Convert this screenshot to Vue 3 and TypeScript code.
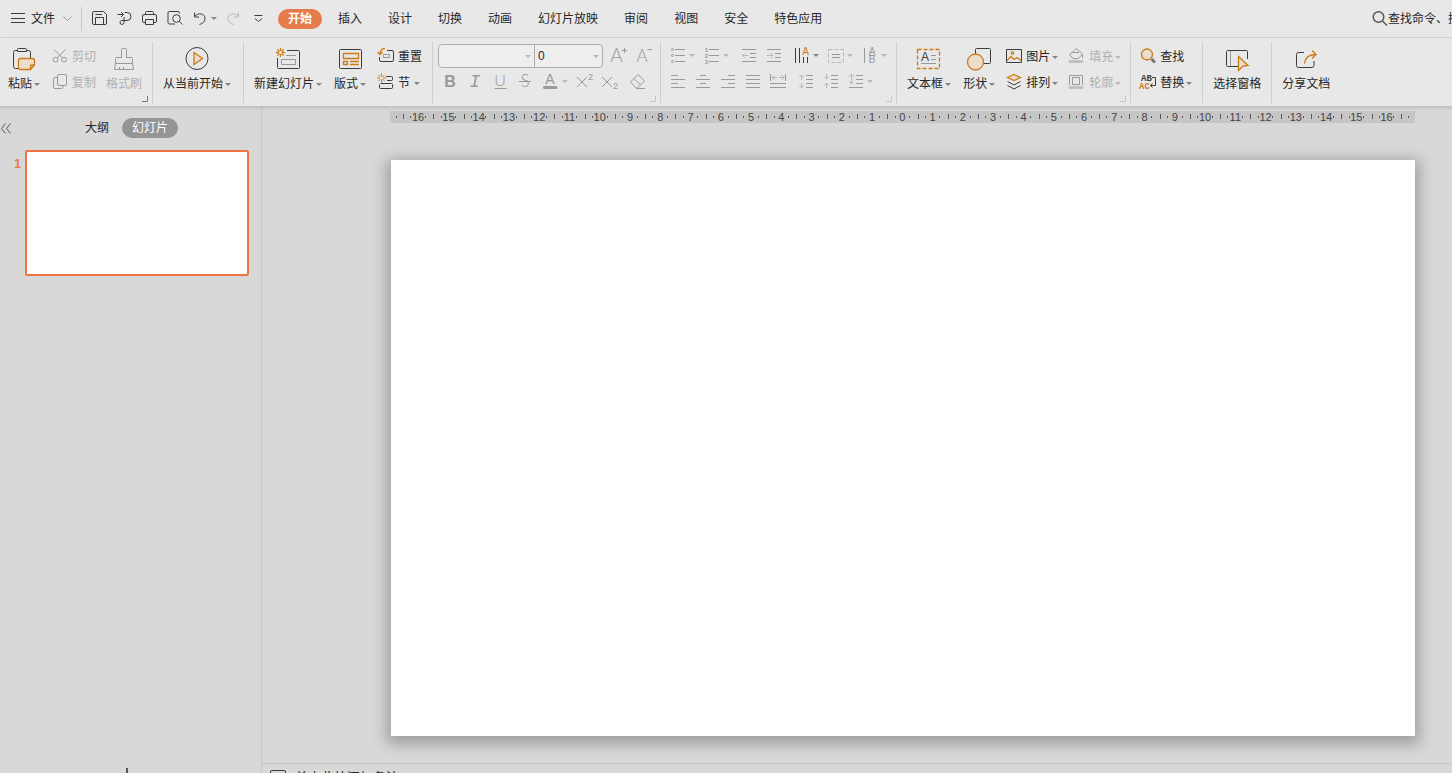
<script setup lang="ts">
import { h, ref } from 'vue'

type Part = { c: string; d?: string; t?: string; x?: number; y?: number; s?: number }

const p = (c: string, d: string): Part => ({ c, d })
const t = (c: string, text: string, x: number, y: number, s: number): Part => ({ c, t: text, x, y, s })
const circle = (x: number, y: number, r: number) =>
  `M${x - r} ${y}a${r} ${r} 0 1 0 ${2 * r} 0a${r} ${r} 0 1 0 ${-2 * r} 0Z`
const star = (x: number, y: number) =>
  [[0, 1], [1, 0], [0.7, 0.7], [0.7, -0.7]]
    .map(([a, b]) => `M${x - a * 4.5} ${y - b * 4.5}L${x - a * 1.5} ${y - b * 1.5}M${x + a * 1.5} ${y + b * 1.5}L${x + a * 4.5} ${y + b * 4.5}`)
    .join('')

const icons: Record<string, { size: [number, number]; parts: Part[] }> = {
  menu: { size: [14, 17], parts: [p('k', 'M0 3.5H14M0 8.5H14M0 12.5H14')] },
  chevron: { size: [9, 17], parts: [p('g', 'M0.5 6.5L4.5 10.5L8.5 6.5')] },
  caret: { size: [6, 17], parts: [p('fill', 'M0 7H6L3 10Z')] },
  save: { size: [17, 17], parts: [p('k', 'M3 1.5H12.5L15.5 4.5V13a1.5 1.5 0 0 1-1.5 1.5H3A1.5 1.5 0 0 1 1.5 13V3A1.5 1.5 0 0 1 3 1.5ZM4.5 14.5V7.5H12.5V14.5M4.5 4.5H11')] },
  output: { size: [17, 17], parts: [p('k', 'M1.5 4.5H7.5M5 2L7.5 4.5L5 7M8.5 2.5H11a4 4 0 0 1 0 8H5.5a2 2 0 1 0 2.5 2V7')] },
  print: { size: [17, 17], parts: [p('k', 'M4.5 4.5V2.5a1 1 0 0 1 1-1H11.5a1 1 0 0 1 1 1V4.5M4.5 12.5H3a1.5 1.5 0 0 1-1.5-1.5V6A1.5 1.5 0 0 1 3 4.5H14A1.5 1.5 0 0 1 15.5 6V11a1.5 1.5 0 0 1-1.5 1.5H12.5M4.5 9.5H12.5V14.5H4.5Z')] },
  preview: { size: [17, 17], parts: [p('k', 'M13.5 3.5V3A1.5 1.5 0 0 0 12 1.5H3.5A1.5 1.5 0 0 0 2 3V12.5A1.5 1.5 0 0 0 3.5 14H9'), p('k', circle(10.5, 8.5, 3.8)), p('k', 'M13.3 11.3L16.5 14.5')] },
  undo: { size: [17, 17], parts: [p('k', 'M3.5 2.5V7H8M3.5 6.5C6.5 2.5 14 3 14 8.5C14 12 11.5 13.5 8.5 14.5')] },
  redo: { size: [17, 17], parts: [p('l', 'M13.5 2.5V7H9M13.5 6.5C10.5 2.5 3 3 3 8.5C3 12 5.5 13.5 8.5 14.5')] },
  more: { size: [17, 17], parts: [p('k', 'M4.5 5.5H12.5M5 8.5L8.5 11.5L12 8.5')] },
  search: { size: [16, 17], parts: [p('m', circle(6.5, 7, 5.3)), p('m', 'M10.5 11L15 15.5')] },
  collapse: { size: [12, 11], parts: [p('m thinline', 'M5.5 0.5L1.5 5.5L5.5 10.5M10.5 0.5L6.5 5.5L10.5 10.5')] },
  add: { size: [16, 16], parts: [p('m thick', 'M8 0V16M0 8H16')] },
  notes: { size: [16, 14], parts: [p('k', 'M2 0.5H14A1.5 1.5 0 0 1 15.5 2V12A1.5 1.5 0 0 1 14 13.5H2A1.5 1.5 0 0 1 0.5 12V2A1.5 1.5 0 0 1 2 0.5ZM4 5.5H12M4 8.5H12')] },
  launcher: { size: [6, 6], parts: [p('', 'M5.5 0V5.5H0')] },

  paste: { size: [26, 26], parts: [p('k', 'M7 4.5H4.5a2 2 0 0 0-2 2V20.5a2 2 0 0 0 2 2H7M15 4.5H17.5a2 2 0 0 1 2 2V12M7.5 2.5H14.5a1 1 0 0 1 1 1V5.5H6.5V3.5a1 1 0 0 1 1-1Z'), p('o tint', 'M9.5 12.5H21.5a2 2 0 0 1 2 2V19L19.5 23.5H9.5a2 2 0 0 1-2-2V14.5a2 2 0 0 1 2-2Z'), p('o', 'M23.5 19H20.5a1 1 0 0 0-1 1V23')] },
  cut: { size: [18, 18], parts: [p('g', circle(5.5, 12.7, 2.4)), p('g', circle(14, 12.7, 2.4)), p('g', 'M4 2.5L12.5 11M15.5 2.5L7 11')] },
  copy: { size: [18, 18], parts: [p('g', 'M9 1.5H15a1.5 1.5 0 0 1 1.5 1.5V11a1.5 1.5 0 0 1-1.5 1.5H9A1.5 1.5 0 0 1 7.5 11V3A1.5 1.5 0 0 1 9 1.5ZM7.5 4.5H5A1.5 1.5 0 0 0 3.5 6V14A1.5 1.5 0 0 0 5 15.5H11.5A1.5 1.5 0 0 0 13 14V12.5')] },
  painter: { size: [26, 26], parts: [p('g', 'M10.5 11.5V3.5a1 1 0 0 1 1-1H14.5a1 1 0 0 1 1 1V11.5H20.5a1 1 0 0 1 1 1V17.5H4.5V12.5a1 1 0 0 1 1-1ZM4.5 17.5L3.5 23.5H22.5L21.5 17.5M8.5 23.5V21M12.5 23.5V21')] },
  play: { size: [26, 26], parts: [p('k', circle(13, 12.5, 11)), p('o tint', 'M10 6.5L18.5 12.5L10 18.5Z')] },
  newSlide: { size: [26, 26], parts: [p('k', 'M12 4.5H23.5a1 1 0 0 1 1 1V21.5a1 1 0 0 1-1 1H3.5a1 1 0 0 1-1-1V12'), p('g', 'M6.5 13.5H20.5V18.5H6.5ZM11 9.5H21'), p('o', star(5.5, 6.5))] },
  layout: { size: [26, 26], parts: [p('k', 'M3.5 3.5H23.5a1 1 0 0 1 1 1V21.5a1 1 0 0 1-1 1H3.5a1 1 0 0 1-1-1V4.5a1 1 0 0 1 1-1Z'), p('o', 'M6.5 7.5H21.5V12.5H6.5ZM6.5 15.5H10.5V18.5H6.5ZM13 15.5H22M13 18.5H22')] },
  reset: { size: [18, 18], parts: [p('k', 'M11 3.5H16a1.5 1.5 0 0 1 1.5 1.5V13a1.5 1.5 0 0 1-1.5 1.5H5A1.5 1.5 0 0 1 3.5 13V10'), p('g', 'M7.5 7.5H13.5V10.5H7.5Z'), p('o', 'M9 1.5C5.5 1.5 4 3.5 4 7.5M1.5 5L4 7.5L6.5 5')] },
  section: { size: [18, 18], parts: [p('k', 'M10 3.5H15.5a1 1 0 0 1 1 1V6.5a1 1 0 0 1-1 1H11M4.5 10.5H15.5a1 1 0 0 1 1 1V14.5a1 1 0 0 1-1 1H4.5a1 1 0 0 1-1-1V11.5'), p('o thinline', star(5.5, 5))] },

  grow: { size: [17, 17], parts: [t('thin', 'A', 6.5, 15, 19), p('g', 'M12 3.5H17M14.5 1V6')] },
  shrink: { size: [17, 17], parts: [t('thin', 'A', 7, 15, 17), p('g', 'M12.5 2.5H17')] },
  bold: { size: [17, 17], parts: [t('bold', 'B', 8, 14, 16)] },
  italic: { size: [17, 17], parts: [t('italic', 'I', 8, 14, 18)] },
  underline: { size: [17, 17], parts: [t('thin', 'U', 8, 13, 16), p('g', 'M2.5 15.5H14.5')] },
  strike: { size: [17, 17], parts: [t('thin', 'S', 8, 14, 17), p('g', 'M2 8.5H14')] },
  color: { size: [17, 17], parts: [t('', 'A', 8, 11, 14), p('bar', 'M2.5 14.5H14')] },
  sup: { size: [17, 17], parts: [p('g', 'M1 4L11 14M11 4L1 14'), t('', '2', 14.5, 7, 9)] },
  sub: { size: [17, 17], parts: [p('g', 'M1 4L11 14M11 4L1 14'), t('', '2', 14.5, 16, 9)] },
  eraser: { size: [17, 17], parts: [p('g', 'M1.5 9L9 1.5L15.5 8L8.5 15H7ZM5 5.5L11.5 12M7 15.5H16')] },
  bullets: { size: [17, 17], parts: [p('g', circle(3.5, 2.5, 1) + circle(3.5, 8.5, 1) + circle(3.5, 14.5, 1) + 'M6 2.5H16M6 8.5H16M6 14.5H16')] },
  numbers: { size: [17, 17], parts: [t('bold', '1', 3.5, 5, 6), t('bold', '2', 3.5, 11, 6), t('bold', '3', 3.5, 17, 6), p('g', 'M6 2.5H16M6 8.5H16M6 14.5H16')] },
  outdent: { size: [17, 17], parts: [p('g', 'M2 2.5H16M10 6.5H16M10 10.5H16M2 14.5H16'), p('l', 'M2.5 8.5H8M5 6L2.5 8.5L5 11')] },
  indent: { size: [17, 17], parts: [p('g', 'M2 2.5H16M10 6.5H16M10 10.5H16M2 14.5H16'), p('l', 'M2 8.5H8M5.5 6L8 8.5L5.5 11')] },
  direction: { size: [17, 17], parts: [p('k', 'M2.5 1V16M6.5 1V16M10.5 10V16M14.5 10V16'), t('ot', 'A', 12.5, 8, 10)] },
  valign: { size: [17, 17], parts: [p('l dash', 'M1.5 2.5H16.5V15.5H1.5Z'), p('g', 'M5 7.5H13M5 10.5H13')] },
  fit: { size: [17, 17], parts: [p('g', 'M3.5 1V16'), t('', 'A', 11, 8, 10), t('', 'B', 11, 16, 10), p('g', 'M8 8.5H14')] },
  left: { size: [17, 17], parts: [p('g', 'M2 2.5H9M2 6.5H16M2 10.5H9M2 14.5H16')] },
  center: { size: [17, 17], parts: [p('g', 'M6 2.5H12M2 6.5H16M6 10.5H12M2 14.5H16')] },
  right: { size: [17, 17], parts: [p('g', 'M9 2.5H16M2 6.5H16M9 10.5H16M2 14.5H16')] },
  justify: { size: [17, 17], parts: [p('g', 'M2 2.5H16M2 6.5H16M2 10.5H16M2 14.5H16')] },
  spread: { size: [17, 17], parts: [p('g', 'M1.5 1V8M16.5 1V8M1 10.5H17M1 14.5H17'), p('l', 'M3 4.5H8M5.5 2L3 4.5L5.5 7M10 4.5H15M12.5 2L15 4.5L12.5 7')] },
  spaceOut: { size: [17, 17], parts: [p('g', 'M9 2.5H16M9 6.5H16M9 10.5H16M9 14.5H16'), p('l', 'M4.5 2V7M2 4.5L4.5 2L7 4.5M4.5 10V15M2 12.5L4.5 15L7 12.5')] },
  spaceIn: { size: [17, 17], parts: [p('g', 'M9 2.5H16M9 6.5H16M9 10.5H16M9 14.5H16'), p('l', 'M4.5 1V6M2 3.5L4.5 6L7 3.5M4.5 10V15M2 12.5L4.5 10L7 12.5')] },
  spacing: { size: [17, 17], parts: [p('g', 'M9 2.5H16M9 6.5H16M9 10.5H16M2 14.5H16'), p('l', 'M4.5 1V11M2 3.5L4.5 1L7 3.5M2 8.5L4.5 11L7 8.5')] },

  textbox: { size: [26, 26], parts: [p('o dash', 'M1.5 3.5H23.5V22.5H1.5Z'), t('kt', 'A', 9, 15, 12), p('g', 'M15 9.5H20M15 13.5H20M5 17.5H20')] },
  shapes: { size: [26, 26], parts: [p('k', 'M10.5 2.5H23.5a1 1 0 0 1 1 1V16.5a1 1 0 0 1-1 1H9.5V3.5a1 1 0 0 1 1-1Z'), p('o tint', circle(9.5, 16, 8))] },
  picture: { size: [18, 18], parts: [p('k', 'M2.5 2.5H17.5V15.5H2.5Z'), p('o', 'M3 13.5L7 9.5L10 12.5L13 10.5L17 13.5'), p('o', circle(8.5, 6, 1.2))] },
  arrange: { size: [18, 18], parts: [p('k', 'M3.5 8.5L10 12L16.5 8.5M3.5 12.5L10 16L16.5 12.5'), p('o tint', 'M10 1.5L16.5 4.5L10 7.5L3.5 4.5Z')] },
  fill: { size: [18, 18], parts: [p('g', 'M5 5.5L9 1.5L15.5 7L11.5 11.5H6L2.5 7.5L5 5.5H12M15.5 7V11'), p('bar light', 'M3 14.5H15')] },
  outline: { size: [18, 18], parts: [p('g', 'M2.5 12V2.5H15.5V12M5.5 11.5V4.5H12.5V11.5Z'), p('bar light', 'M3 14.5H15')] },
  find: { size: [18, 18], parts: [p('o tint', circle(9, 7.5, 5.5)), p('handle', 'M13.5 12L17 15.5')] },
  replace: { size: [18, 18], parts: [t('kt mono', 'AB', 8.5, 8, 9), t('ot mono', 'AC', 6.5, 16, 9), p('k', 'M14 4.5H17.5V12.5H12.5M14.5 10.5L12.5 12.5L14.5 14.5')] },
  pane: { size: [26, 26], parts: [p('k', 'M14 20.5H3.5a1 1 0 0 1-1-1V5.5a1 1 0 0 1 1-1H22.5a1 1 0 0 1 1 1V13'), p('g', 'M6.5 5V20'), p('o tint', 'M14.5 10.5L24 19.5L19 20L14.5 24.5Z')] },
  share: { size: [26, 26], parts: [p('k', 'M11 6.5H5.5a2 2 0 0 0-2 2V19.5a2 2 0 0 0 2 2H19a2 2 0 0 0 2-2V15'), p('o', 'M11.5 17.5C12 12 15 8.5 23 8.5M19 4.5L23 8.5L19 12.5')] },
}

const Icon = (props: { name: string }) => {
  const { size, parts } = icons[props.name]
  return h(
    'svg',
    { class: 'ic', width: size[0], height: size[1], viewBox: `0 0 ${size[0]} ${size[1]}`, 'aria-hidden': 'true' },
    parts.map((q) =>
      q.d ? h('path', { class: q.c, d: q.d }) : h('text', { class: q.c, x: q.x, y: q.y, 'font-size': q.s, 'text-anchor': 'middle' }, q.t),
    ),
  )
}
Icon.props = ['name']

const quick = [
  { icon: 'save', label: '保存' },
  { icon: 'output', label: '输出' },
  { icon: 'print', label: '打印' },
  { icon: 'preview', label: '打印预览' },
  { icon: 'undo', label: '撤销', menu: true },
  { icon: 'redo', label: '恢复' },
  { icon: 'more', label: '更多' },
]
const tabs = ['开始', '插入', '设计', '切换', '动画', '幻灯片放映', '审阅', '视图', '安全', '特色应用']
const tab = ref('开始')
const panel = ref('幻灯片')

type Tool = { icon: string; label: string; menu?: boolean; on?: boolean }
const tool = (icon: string, label: string, menu = false, on = false): Tool => ({ icon, label, menu, on })

const sizeTools = [tool('grow', '增大字号'), tool('shrink', '减小字号')]
const fontTools = [
  [tool('bold', '加粗'), tool('italic', '倾斜'), tool('underline', '下划线'), tool('strike', '删除线'), tool('color', '字体颜色', true), tool('sup', '上标'), tool('sub', '下标')],
  [tool('eraser', '清除格式')],
]
const paragraphRows = [
  [
    [tool('bullets', '项目符号', true), tool('numbers', '编号', true)],
    [tool('outdent', '减少缩进'), tool('indent', '增加缩进')],
    [tool('direction', '文字方向', true, true), tool('valign', '对齐文本', true), tool('fit', '文字排列', true)],
  ],
  [
    [tool('left', '左对齐'), tool('center', '居中'), tool('right', '右对齐'), tool('justify', '两端对齐'), tool('spread', '分散对齐')],
    [tool('spaceOut', '增大段距'), tool('spaceIn', '减小段距'), tool('spacing', '行距', true)],
  ],
]
const marks = Array.from({ length: 33 }, (_, i) => Math.abs(i - 16))
</script>

<template>
  <div class="app">
    <header class="topbar">
      <button class="file"><Icon name="menu" /><span>文件</span><Icon name="chevron" class="file-arrow" /></button>
      <div class="quick">
        <button v-for="q in quick" :key="q.icon" class="tool" :aria-label="q.label">
          <Icon :name="q.icon" /><Icon v-if="q.menu" name="caret" />
        </button>
      </div>
      <nav class="tabs">
        <button v-for="name in tabs" :key="name" class="tab" :class="{ active: tab === name }" @click="tab = name">{{ name }}</button>
      </nav>
      <button class="search"><Icon name="search" /><span>查找命令、搜索模板</span></button>
    </header>

    <div class="ribbon">
      <section class="group clip">
        <button class="big"><Icon name="paste" /><span class="cap">粘贴<Icon name="caret" /></span></button>
        <div class="stack">
          <button class="small" disabled><Icon name="cut" />剪切</button>
          <button class="small" disabled><Icon name="copy" />复制</button>
        </div>
        <button class="big" disabled><Icon name="painter" /><span class="cap">格式刷</span></button>
        <button class="launch dark" aria-label="剪贴板设置"><Icon name="launcher" /></button>
      </section>

      <section class="group show">
        <button class="big"><Icon name="play" /><span class="cap">从当前开始<Icon name="caret" /></span></button>
      </section>

      <section class="group slides">
        <div class="bigs">
          <button class="big"><Icon name="newSlide" /><span class="cap">新建幻灯片<Icon name="caret" /></span></button>
          <button class="big"><Icon name="layout" /><span class="cap">版式<Icon name="caret" /></span></button>
        </div>
        <div class="stack">
          <button class="small"><Icon name="reset" />重置</button>
          <button class="small"><Icon name="section" />节<Icon name="caret" /></button>
        </div>
      </section>

      <section class="group font">
        <div class="stack">
          <div class="row">
            <div class="fields">
              <label class="field family"><select aria-label="字体"><option></option></select><Icon name="caret" /></label>
              <label class="field size"><select aria-label="字号"><option>0</option></select><Icon name="caret" /></label>
            </div>
            <div class="cluster">
              <button v-for="b in sizeTools" :key="b.icon" class="tool" :aria-label="b.label" disabled><Icon :name="b.icon" /></button>
            </div>
          </div>
          <div class="row">
            <div v-for="(c, i) in fontTools" :key="i" class="cluster">
              <button v-for="b in c" :key="b.icon" class="tool" :aria-label="b.label" disabled>
                <Icon :name="b.icon" /><Icon v-if="b.menu" name="caret" />
              </button>
            </div>
          </div>
        </div>
        <button class="launch" aria-label="字体设置"><Icon name="launcher" /></button>
      </section>

      <section class="group para">
        <div class="stack">
          <div v-for="(r, j) in paragraphRows" :key="j" class="row">
            <div v-for="(c, i) in r" :key="i" class="cluster">
              <button v-for="b in c" :key="b.icon" class="tool" :aria-label="b.label" :disabled="!b.on">
                <Icon :name="b.icon" /><Icon v-if="b.menu" name="caret" />
              </button>
            </div>
          </div>
        </div>
        <button class="launch" aria-label="段落设置"><Icon name="launcher" /></button>
      </section>

      <section class="group draw">
        <div class="bigs">
          <button class="big"><Icon name="textbox" /><span class="cap">文本框<Icon name="caret" /></span></button>
          <button class="big"><Icon name="shapes" /><span class="cap">形状<Icon name="caret" /></span></button>
        </div>
        <div class="stack">
          <button class="small"><Icon name="picture" /><span class="cap">图片<Icon name="caret" /></span></button>
          <button class="small"><Icon name="arrange" /><span class="cap">排列<Icon name="caret" /></span></button>
        </div>
        <div class="stack">
          <button class="small" disabled><Icon name="fill" /><span class="cap">填充<Icon name="caret" /></span></button>
          <button class="small" disabled><Icon name="outline" /><span class="cap">轮廓<Icon name="caret" /></span></button>
        </div>
        <button class="launch" aria-label="绘图设置"><Icon name="launcher" /></button>
      </section>

      <section class="group edit">
        <div class="stack">
          <button class="small"><Icon name="find" />查找</button>
          <button class="small"><Icon name="replace" /><span class="cap">替换<Icon name="caret" /></span></button>
        </div>
      </section>

      <section class="group pane">
        <button class="big"><Icon name="pane" /><span class="cap">选择窗格</span></button>
      </section>

      <section class="group share">
        <button class="big"><Icon name="share" /><span class="cap">分享文档</span></button>
      </section>
    </div>

    <div class="body">
      <aside class="side">
        <div class="side-head">
          <button class="collapse" aria-label="收起"><Icon name="collapse" /></button>
          <button v-for="name in ['大纲', '幻灯片']" :key="name" class="view" :class="{ active: panel === name }" @click="panel = name">{{ name }}</button>
        </div>
        <ol class="thumbs">
          <li class="thumb"><span class="num">1</span><button class="preview" aria-label="幻灯片 1"></button></li>
        </ol>
        <button class="add" aria-label="新建幻灯片"><Icon name="add" /></button>
      </aside>

      <main class="work">
        <div class="stage">
          <div class="ruler"><span v-for="(n, i) in marks" :key="i" class="mark">{{ n }}</span></div>
          <div class="slide"></div>
        </div>
        <footer class="notes"><Icon name="notes" /><span>单击此处添加备注</span></footer>
      </main>
    </div>
  </div>
</template>

<style>
body {
  background: #d8d8d8;
}
.ic {
  display: block;
  flex: none;
  overflow: visible;
  fill: none;
  stroke: #8a8a8a;
  stroke-width: 1;
}
.ic .k { stroke: #3c3c3c; }
.ic .m { stroke: #555; stroke-width: 1.5; }
.ic .g { stroke: #999; }
.ic .l { stroke: #b8b8b8; }
.ic .o { stroke: #cc7a14; stroke-width: 1.3; }
.ic .tint { fill: #eaddcc; }
.ic .thinline { stroke-width: 1; }
.ic .thick { stroke-width: 2; }
.ic .dash { stroke-dasharray: 4 2; }
.ic .bar { stroke: #999; stroke-width: 3; stroke-linecap: round; }
.ic .light { stroke: #c0c0c0; }
.ic .handle { stroke: #777; stroke-width: 3; }
.ic .fill { fill: #858585; stroke: none; }
.ic text { fill: #999; stroke: none; font-family: "Liberation Sans", Arial, sans-serif; }
.ic .thin { font-family: Lato, "Liberation Sans", sans-serif; font-weight: 300; }
.ic .bold { font-weight: 700; }
.ic .italic { font-family: "Liberation Mono", monospace; font-style: italic; }
.ic .mono { font-family: "Liberation Mono", monospace; font-weight: 700; }
.ic .kt { fill: #3c3c3c; }
.ic .ot { fill: #cc7a14; }
</style>

<style scoped>
.app {
  display: flex;
  flex-direction: column;
  height: 100vh;
  overflow: hidden;
  background: #d8d8d8;
  color: #262626;
  font: 12px/20px "Liberation Sans", "Noto Sans CJK SC", sans-serif;
}
button {
  display: flex;
  flex: none;
  align-items: center;
  margin: 0;
  padding: 0;
  border: 0;
  background: none;
  color: inherit;
  font: inherit;
  white-space: nowrap;
}
button:disabled { color: #b0b0b0; }
button:disabled .ic :deep(.fill) { fill: #b8b8b8; }
.topbar {
  display: flex;
  flex: none;
  align-items: center;
  height: 37px;
  border-bottom: 1px solid #d6d6d6;
  background: #e8e8e8;
}
.file {
  gap: 6px;
  height: 24px;
  padding: 0 9px 0 11px;
  border-right: 1px solid #c8c8c8;
}
.file-arrow { margin-left: 2px; }
.quick {
  display: flex;
  padding: 0 7px 0 5px;
}
.tool {
  gap: 3px;
  padding: 0 4px;
}
.tabs {
  display: flex;
  gap: 6px;
}
.tab {
  padding: 0 10px;
  border-radius: 10px;
}
.tab.active {
  background: #e67b4b;
  color: #fff;
  font-weight: 700;
}
.search {
  width: 80px;
  margin-left: auto;
  overflow: hidden;
}
.ribbon {
  display: flex;
  flex: none;
  position: relative;
  padding: 4px 0 3px;
  border-bottom: 1px solid #c4c4c4;
  background: #e8e8e8;
  box-shadow: 0 1px 3px rgba(0, 0, 0, 0.14);
}
.group {
  display: flex;
  flex: none;
  position: relative;
  gap: 10px;
  height: 60px;
  padding-top: 1px;
  border-right: 1px solid #cfcfcf;
}
.group.clip { padding-left: 8px; padding-right: 10px; }
.group.show { padding-left: 10px; padding-right: 12px; }
.group.slides { padding-left: 10px; padding-right: 10px; }
.group.font { padding-left: 5px; padding-right: 4px; }
.group.para { padding-left: 4px; padding-right: 5px; }
.group.draw { gap: 9px; padding-left: 10px; padding-right: 9px; }
.group.edit { padding-left: 7px; padding-right: 10px; }
.group.pane { padding-left: 10px; padding-right: 10px; }
.group.share { padding-left: 10px; border-right: 0; }
.bigs {
  display: flex;
  gap: 12px;
}
.big {
  flex-direction: column;
  gap: 2px;
  height: 52px;
  padding-top: 3px;
}
.cap {
  display: flex;
  align-items: center;
  gap: 2px;
}
.stack {
  display: flex;
  flex-direction: column;
}
.small {
  gap: 4px;
  height: 26px;
  padding-top: 2px;
}
.small > .ic:first-child { margin-bottom: 2px; }
.row {
  display: flex;
  align-items: flex-start;
  gap: 3px;
  height: 26px;
}
.cluster {
  display: flex;
  padding-top: 4px;
}
.fields {
  display: flex;
  height: 24px;
  box-sizing: border-box;
  margin-top: 1px;
  width: 165px;
  border: 1px solid #adadad;
  border-radius: 4px;
  background: #eee;
}
.field {
  display: flex;
  flex: 1;
  align-items: center;
  padding-right: 3px;
}
.field.family {
  flex: none;
  width: 92px;
  border-right: 1px solid #adadad;
}
.field select {
  flex: 1;
  min-width: 0;
  height: 20px;
  padding: 0 3px;
  border: 0;
  appearance: none;
  background: none;
  color: #262626;
  font: inherit;
}
.field .ic :deep(.fill) { fill: #b8b8b8; }
.launch {
  position: absolute;
  right: 4px;
  bottom: 1px;
}
.launch .ic { stroke: #c8c8c8; }
.launch.dark .ic { stroke: #777; }
.body {
  display: flex;
  flex: 1;
  min-height: 0;
}
.side {
  display: flex;
  flex: none;
  flex-direction: column;
  width: 261px;
  border-right: 1px solid #c8c8c8;
}
.side-head {
  display: flex;
  align-items: center;
  gap: 3px;
  padding: 11px 0 12px;
}
.collapse { margin-right: 60px; }
.view {
  padding: 0 10px;
  border-radius: 10px;
}
.view.active {
  background: #959595;
  color: #fff;
}
.thumbs {
  flex: 1;
  margin: 0;
  padding: 0 12px 0 0;
  list-style: none;
}
.thumb {
  display: flex;
}
.num {
  width: 25px;
  padding: 4px 4px 0 0;
  box-sizing: border-box;
  color: #ee7442;
  font-weight: 700;
  text-align: right;
}
.preview {
  flex: 1;
  aspect-ratio: 16 / 9;
  border: 2px solid #ee7442;
  border-radius: 2px;
  background: #fff;
}
.add {
  align-items: flex-start;
  justify-content: center;
  height: 5px;
  padding-right: 7px;
  overflow: hidden;
}
.work {
  display: flex;
  flex: 1;
  flex-direction: column;
  min-width: 0;
}
.stage {
  flex: 1;
  min-height: 0;
  padding: 4px 37px 0 128px;
}
.ruler {
  display: flex;
  height: 12px;
  padding: 0 13px;
  background:
    linear-gradient(#555, #555) 6px 5px / 1px 2px no-repeat,
    linear-gradient(#555, #555) calc(100% - 6px) 5px / 1px 2px no-repeat,
    linear-gradient(#555, #555) calc(100% - 13px) 3px / 1px 5px no-repeat,
    #c6c6c6;
  color: #444;
  font-size: 11px;
  line-height: 12px;
}
.mark {
  flex: 1;
  min-width: 0;
  background:
    linear-gradient(#555, #555) 0 3px / 1px 5px no-repeat,
    linear-gradient(#555, #555) 25% 5px / 1px 2px no-repeat,
    linear-gradient(#555, #555) 75% 5px / 1px 2px no-repeat;
  text-align: center;
}
.slide {
  aspect-ratio: 16 / 9;
  margin: 37px 0 0 1px;
  background: #fff;
  box-shadow: 0 4px 14px 4px rgba(0, 0, 0, 0.28);
}
.notes {
  display: flex;
  flex: none;
  align-items: flex-start;
  gap: 9px;
  height: 9px;
  padding-left: 8px;
  border-top: 1px solid #c6c6c6;
  overflow: hidden;
  font-size: 13px;
}
.notes .ic { margin-top: 6px; }
.notes span { margin-top: 4px; }
</style>
